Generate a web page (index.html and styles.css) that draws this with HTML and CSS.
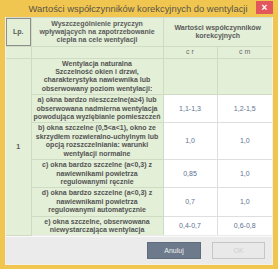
FILE: index.html
```html
<!DOCTYPE html>
<html lang="pl">
<head>
<meta charset="UTF-8">
<title>Wartości współczynników korekcyjnych do wentylacji</title>
<link rel="stylesheet" href="styles.css">
</head>
<body>

<div class="okno">

 <!-- PASEK TYTUŁU -->
 <div class="tytul">
  <span class="tytul-tekst">Wartości współczynników korekcyjnych do wentylacji</span>
  <button class="zamknij">&times;</button>
 </div>

 <div class="panel">

  <!-- TABELA -->
  <table class="tabela">
   <colgroup>
    <col class="k-lp">
    <col class="k-opis">
    <col class="k-war">
    <col class="k-war2">
   </colgroup>
   <tr class="naglowek">
    <th class="lp">Lp.</th>
    <th>Wyszczególnienie przyczyn wpływających na zapotrzebowanie ciepła na cele wentylacji</th>
    <th colspan="2">Wartości współczynników korekcyjnych</th>
   </tr>
   <tr class="naglowek">
    <th></th>
    <th></th>
    <th>c r</th>
    <th>c m</th>
   </tr>
   <tr>
    <td class="nr" rowspan="6">1</td>
    <td class="opis">Wentylacja naturalna<br>Szczelność okien i drzwi, charakterystyka nawiewnika lub obserwowany poziom wentylacji:</td>
    <td class="pusta"></td>
    <td class="pusta"></td>
   </tr>
   <tr>
    <td class="opis">a) okna bardzo nieszczelne(a≥4) lub obserwowana nadmierna wentylacja powodująca wyziębianie pomieszczeń</td>
    <td class="wart">1,1-1,3</td>
    <td class="wart">1,2-1,5</td>
   </tr>
   <tr>
    <td class="opis">b) okna szczelne (0,5&lt;a&lt;1), okno ze skrzydłem rozwieralno-uchylnym lub opcją rozszczelniania: warunki wentylacji normalne</td>
    <td class="wart">1,0</td>
    <td class="wart">1,0</td>
   </tr>
   <tr>
    <td class="opis">c) okna bardzo szczelne (a&lt;0,3) z nawiewnikami powietrza regulowanymi ręcznie</td>
    <td class="wart">0,85</td>
    <td class="wart">1,0</td>
   </tr>
   <tr>
    <td class="opis">d) okna bardzo szczelne (a&lt;0,3) z nawiewnikami powietrza regulowanymi automatycznie</td>
    <td class="wart">0,7</td>
    <td class="wart">1,0</td>
   </tr>
   <tr>
    <td class="opis">e) okna szczelne, obserwowana niewystarczająca wentylacja</td>
    <td class="wart">0,4-0,7</td>
    <td class="wart">0,6-0,8</td>
   </tr>
  </table>

  <!-- PRZYCISKI -->
  <div class="stopka">
   <button class="btn anuluj">Anuluj</button>
   <button class="btn ok" disabled>OK</button>
  </div>

 </div>
</div>

</body>
</html>
```

FILE: styles.css
```css
body{
 margin:0;
 background:#f1c650;
 font-family:"Liberation Sans", Arial, sans-serif;
}

.okno{
 width:278px;
 height:269px;
 display:flex;
 flex-direction:column;
 background:#f1c650;
}

/* PASEK TYTUŁU */
.tytul{
 height:17px;
 display:flex;
 align-items:center;
}
.tytul-tekst{
 flex:1;
 text-align:center;
 padding-left:20px;
 font-size:9.4px;
 color:#5a5548;
}
.zamknij{
 width:17px;
 height:13px;
 margin-right:5px;
 margin-top:-2px;
 padding:0;
 border:none;
 background:#e2575c;
 color:#fff;
 font-size:10px;
 line-height:13px;
 font-family:"Liberation Sans", Arial, sans-serif;
 font-weight:bold;
}

/* PANEL */
.panel{
 margin:0 5px 4px;
 flex:1;
 display:flex;
 flex-direction:column;
 background:#ebebeb;
 border:1px solid #f3f1ea;
 border-top:none;
}

/* TABELA */
.tabela{
 width:266px;
 table-layout:fixed;
 border-collapse:collapse;
 font-size:7px;
 line-height:8.4px;
}
.k-lp{width:25px;}
.k-opis{width:132px;}
.k-war{width:54px;}
.k-war2{width:55px;}

.tabela th,
.tabela td{
 padding:1px 1px;
 border:1px solid #cfdcc3;
 text-align:center;
 vertical-align:middle;
}
.tabela th:first-child,
.tabela td.nr{border-left:none;}
.tabela th:last-child,
.tabela td:last-child{border-right:none;}
.tabela tr:last-child td{border-bottom:none;}

.naglowek th{
 background:#e3efd7;
 color:#5b5b5b;
 font-weight:bold;
}
.naglowek:first-child th{
 border-top:1px solid #d6ddd0;
 padding:1.5px 1px;
}
.naglowek + .naglowek th{
 font-weight:normal;
 color:#6b6b6b;
}
.tabela th.lp{
 box-shadow:inset 0 0 0 1px #8d8d8d;
}

.nr{
 background:#e3efd7;
 color:#5b5b5b;
 font-weight:bold;
}
.opis{
 background:#e3efd7;
 color:#545454;
 font-weight:bold;
}
.pusta{background:#e3efd7;}
.wart{
 background:#fff;
 color:#5c7190;
 border-color:#dedede !important;
}

/* STOPKA */
.stopka{
 flex:1;
 display:flex;
 justify-content:flex-end;
 align-items:flex-start;
 gap:11px;
 padding:5px 7px 0 0;
 border-top:1px solid #fafafa;
}
.btn{
 width:54px;
 height:17px;
 font-size:7px;
 font-family:"Liberation Sans", Arial, sans-serif;
 padding:0;
}
.anuluj{
 background:#6c7a8c;
 border:1px solid #5f6c7d;
 color:#f0f0f0;
}
.ok{
 width:53px;
 background:#e9e9e9;
 border:1px solid #c6c6c6;
 color:#cfcfcf;
}
```
